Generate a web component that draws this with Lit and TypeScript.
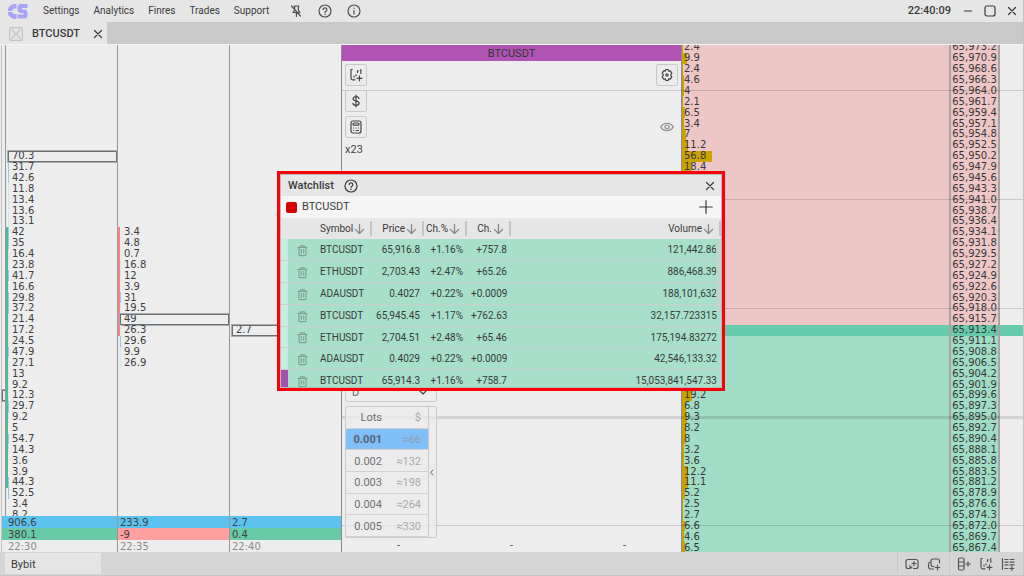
import { LitElement, html, css, svg, nothing } from "lit";
import { customElement } from "lit/decorators.js";
import { classMap } from "lit/directives/class-map.js";
import { styleMap } from "lit/directives/style-map.js";

const ROWS = 47;
const LAST_PRICE_ROW = 26;
const STEP = 2.3;
const TOP_PRICE = 65973.2;
const rowIndexes = Array.from({ length: ROWS }, (_, i) => i);

interface Cluster {
  time: string;
  total: string;
  delta: string;
  start: number;
  values: string[];
  peak: number;
  bar?: { from: number; to: number; up: boolean };
}

const clusters: Cluster[] = [
  {
    time: "22:30", total: "906.6", delta: "380.1", start: 10, peak: 10,
    bar: { from: 17, to: 40, up: true },
    values: ["70.3", "31.7", "42.6", "11.8", "13.4", "13.6", "13.1", "42", "35", "16.4", "23.8", "41.7", "16.6", "29.8",
      "37.2", "21.4", "17.2", "24.5", "47.9", "27.1", "13", "9.2", "12.3", "29.7", "9.2", "5", "54.7", "14.3", "3.6",
      "3.9", "44.3", "52.5", "3.4", "8.2"],
  },
  {
    time: "22:35", total: "233.9", delta: "-9", start: 17, peak: 25,
    bar: { from: 17, to: 26, up: false },
    values: ["3.4", "4.8", "0.7", "16.8", "12", "3.9", "31", "19.5", "49", "26.3", "29.6", "9.9", "26.9"],
  },
  { time: "22:40", total: "2.7", delta: "0.4", start: 26, peak: 26, values: ["2.7"] },
];

const book: Record<number, number> = {};
[2.4, 9.9, 2.4, 4.6, 4, 2.1, 6.5, 3.4, 7, 11.2, 56.8, 18.4].forEach((v, i) => (book[i] = v));
[19.2, 6.8, 9.3, 8.2, 8, 3.2, 3.6, 12.2, 11.1, 5.2, 2.5, 2.7, 6.6, 4.6, 6.5].forEach((v, i) => (book[32 + i] = v));

const watch = [
  ["BTCUSDT", "65,916.8", "+1.16%", "+757.8", "121,442.86"],
  ["ETHUSDT", "2,703.43", "+2.47%", "+65.26", "886,468.39"],
  ["ADAUSDT", "0.4027", "+0.22%", "+0.0009", "188,101,632"],
  ["BTCUSDT", "65,945.45", "+1.17%", "+762.63", "32,157.723315"],
  ["ETHUSDT", "2,704.51", "+2.48%", "+65.46", "175,194.83272"],
  ["ADAUSDT", "0.4029", "+0.22%", "+0.0009", "42,546,133.32"],
  ["BTCUSDT", "65,914.3", "+1.16%", "+758.7", "15,053,841,547.33"],
];

const lots = [["0.001", "≈66"], ["0.002", "≈132"], ["0.003", "≈198"], ["0.004", "≈264"], ["0.005", "≈330"]];

const icon = (body: unknown, size = 14, vb = 14) => html`<svg class="icon" width=${size} height=${size}
  viewBox="0 0 ${vb} ${vb}" fill="none" stroke="currentColor" stroke-width="1.2" stroke-linecap="round"
  stroke-linejoin="round" aria-hidden="true">${body}</svg>`;

const help = svg`<circle cx="7" cy="7" r="6"/><path d="M5.2 5.6a1.8 1.8 0 1 1 2.7 1.6c-.7.4-.9.7-.9 1.3M7 10.1v.3"/>`;
const info = svg`<circle cx="7" cy="7" r="6"/><path d="M7 6.5v3.4M7 4.1v.2"/>`;
const unpin = svg`<path d="M2.5 2 11.5 12M5 2h5M5.7 2.2v2M9.3 2.2v4l1.6 2.3H9M5.6 6 4 8.5h4M7.4 8.7V12.4"/>`;
const close = svg`<path d="M3.5 3.5l7 7M10.5 3.5l-7 7"/>`;
const minimize = svg`<path d="M3.5 7h7"/>`;
const maximize = svg`<rect x="2" y="2" width="10" height="10" rx="2"/>`;
const plus = svg`<path d="M7 .7v12.6M.7 7h12.6"/>`;
const arrow = svg`<path d="M5 1.2v8.3M1.2 5.8 5 9.6l3.8-3.8"/>`;
const trash = svg`<path d="M2.2 3.6h9.6M5 3.4V1.9h4v1.5M3.2 3.8v7.6q0 1.1 1.1 1.1h5.4q1.1 0 1.1-1.1V3.8M5.7 6v4M8.3 6v4"/>`;
const gear = svg`<path d="M5.900 1.500h2.200l.5 1.700 1.700-.4 1.500 2.300L10.600 7l1.200 1.900-1.500 2.300-1.700-.4-.5 1.700H5.900l-.5-1.700-1.700.4-1.500-2.300L3.400 7 2.200 5.100l1.500-2.300 1.700.4z"/><circle cx="7" cy="7" r="1.200"/>`;
const eye = svg`<path d="M.8 7C3.4 2 10.6 2 13.2 7 10.6 12 3.4 12 .8 7z"/><circle cx="7" cy="7" r="2"/>`;
const dollar = svg`<path d="M10 4.500C9.700 3.300 8.600 2.700 7 2.700c-1.700 0-2.900.7-2.900 2 0 3.100 6 1.400 6 4.600 0 1.300-1.300 2-3 2s-3-.7-3.200-2M7 1v12"/>`;
const calc = svg`<rect x="2" y="1" width="10" height="12" rx="2"/><rect x="4" y="3" width="6" height="2.200" rx="1"/><path d="M4.500 8h.1M7 8h.1M9.500 8h.1M4.500 10.500h.1M7 10.500h2.600"/>`;
const chartAdd = svg`<path d="M3.200 1.500H2V10q0 1.800 1.800 1.800H6M5 9.200v-1M7 7.800v-1M8.500 4.500V2.800h.8M11.800 1.500v4M10.500 7.800v5M8 10.300h5"/>`;
const windowAdd = svg`<path d="M5 11.500H3q-2 0-2-2v-5q0-2 2-2h8q2 0 2 2v5q0 2-2 2H8.500M5 8.700v2.800l2-1.500M9 4.500v4M7 6.500h4"/>`;
const copyAdd = svg`<path d="M7 9.500H6q-2 0-2-2V4q0-2 2-2h4.500q2 0 2 2v2M3 5Q1.500 5.500 1.500 7v2.500q0 2.500 2.500 2.500h2.500M10.500 8.200v4.600M8.200 10.500h4.600"/>`;
const columnAdd = svg`<rect x="1.500" y="1" width="5.500" height="12" rx="1.500"/><path d="M1.500 5H7M1.500 9H7M11 4.800v4.400M8.800 7h4.400"/>`;
const rowsAdd = svg`<path d="M1.500 1.500v11M4 2.500h3M9 2.500h4M4 5.200h3M9 5.200h4M4 7.900h3M9 7.900h4M4 11.500h3M10.800 9.500v4M8.800 11.500h4"/>`;

const base = css`
  * { box-sizing: border-box; }
  button { font: inherit; color: inherit; border: 0; background: none; padding: 0; margin: 0; display: inline-flex; align-items: center; justify-content: center; cursor: pointer; }
  .icon { display: block; flex: none; }
`;

@customElement("price-ladder")
class PriceLadder extends LitElement {
  static styles = [base, css`
    :host { display: flex; flex: 1; min-width: 0; min-height: 0; overflow: hidden; font: 10px/10px "DejaVu Sans", sans-serif; color: #383838; }
    .column { flex: 1; display: flex; flex-direction: column; margin: -3px 0 -1px; min-width: 0; border-left: 1px solid #8d8d8d; }
    .prices { flex: none; width: 51px; border-left: 2px solid #aba3a3; border-right: 2px solid #aba3a3; }
    .blank { flex: none; width: 23px; border: 0; }
    .row { flex: 1; min-height: 0; display: grid; align-items: center; }
    .ask { background: #edc6c6; }
    .bid { background: #a1dcc6; }
    .last { background: #66cbab; }
    .size, .bar { grid-area: 1 / 1; }
    .size { padding-left: 2px; }
    .bar { background: #c9a400; align-self: stretch; }
    .price { text-align: center; }
  `];

  render() {
    const tone = (i: number) => classMap({ row: true, ask: i < LAST_PRICE_ROW, bid: i > LAST_PRICE_ROW, last: i === LAST_PRICE_ROW });
    return html`
      <div class="column">
        ${rowIndexes.map((i) => html`<div class=${tone(i)}>
          ${book[i] === undefined ? nothing : html`<span class="bar" style=${styleMap({ width: `${Math.round(book[i] * 0.52)}px` })}></span>
          <span class="size">${book[i]}</span>`}
        </div>`)}
      </div>
      <div class="column prices">
        ${rowIndexes.map((i) => html`<div class=${tone(i)}><span class="price">${(TOP_PRICE - STEP * i).toLocaleString("en-US", { minimumFractionDigits: 1, maximumFractionDigits: 1 })}</span></div>`)}
      </div>
      <div class="column blank">
        ${rowIndexes.map((i) => html`<div class=${classMap({ row: true, last: i === LAST_PRICE_ROW })}></div>`)}
      </div>`;
  }
}

@customElement("cluster-panel")
class ClusterPanel extends LitElement {
  static styles = [base, css`
    :host { display: flex; min-width: 0; min-height: 0; overflow: hidden; padding-left: 1px; font: 10px/10px "DejaVu Sans", sans-serif; color: #404040; }
    .column { flex: 1; min-width: 0; display: grid; grid-template-rows: minmax(0, 1fr) 12px 12px 12px; border-left: 1px solid #999; }
    .edge { flex: none; width: 4px; border-left: 1px solid #c4c4c4; }
    .ladder { grid-area: 1 / 1 / 5 / 2; display: flex; flex-direction: column; margin: -3px 0 -1px; min-height: 0; }
    .row { flex: 1; min-height: 0; display: flex; align-items: stretch; }
    .mark { width: 2px; }
    .up { background: #4cbd93; }
    .down { background: #ff8080; }
    .value { flex: 1; display: flex; align-items: center; padding-left: 3px; border-left: 1px solid transparent; }
    .light { border-left-color: #d3e6f2; }
    .strong { border-left-color: #8ccdf5; }
    .peak { outline: 1px solid #6b7275; outline-offset: -1px; box-shadow: 0 0 0 1px #a8acae; border-left-color: transparent; }
    .foot { grid-column: 1; z-index: 1; display: flex; align-items: center; padding: 1px 0 0 2px; }
    .total { grid-row: 2; background: #5cc2f0; }
    .delta { grid-row: 3; background: #69caa8; }
    .minus { background: #ff9f9f; }
    .time { grid-row: 4; background: #ededed; color: #8b8b8b; }
  `];

  render() {
    return html`
      <div class="column edge">
        <div class="ladder">${rowIndexes.map((i) => html`<div class="row">${i === 32 ? html`<span class="value peak"></span>` : nothing}</div>`)}</div>
        <span class="foot total"></span><span class="foot delta"></span><span class="foot time"></span>
      </div>
      ${clusters.map((c) => html`<div class="column">
        <div class="ladder">
          ${rowIndexes.map((i) => {
            const value = c.values[i - c.start];
            const marked = c.bar !== undefined && i >= c.bar.from && i <= c.bar.to;
            const n = Number(value);
            return html`<div class="row">
              <span class=${classMap({ mark: true, up: marked && c.bar!.up, down: marked && !c.bar!.up })}></span>
              ${value === undefined ? nothing : html`<span class=${classMap({ value: true, light: n > 9 && n < 28, strong: n >= 28, peak: i === c.peak })}>${value}</span>`}
            </div>`;
          })}
        </div>
        <span class="foot total">${c.total}</span>
        <span class=${classMap({ foot: true, delta: true, minus: c.delta.startsWith("-") })}>${c.delta}</span>
        <span class="foot time">${c.time}</span>
      </div>`)}`;
  }
}

@customElement("chart-panel")
class ChartPanel extends LitElement {
  static styles = [base, css`
    :host { display: flex; flex-direction: column; position: relative; min-width: 0; min-height: 0; border-left: 1px solid #8d8d8d; font: 11px/16px Roboto, sans-serif; color: #444; }
    .title { background: #b053b2; color: #333; text-align: center; height: 16px; line-height: 18px; }
    .tools { display: flex; justify-content: space-between; padding: 3px 3px 0 3px; }
    .stack { display: flex; flex-direction: column; align-items: flex-start; gap: 4px; }
    .tool { width: 22px; height: 22px; border: 1px solid #c9c9c9; border-radius: 2px; background: #ececec; }
    .ghost { border-color: transparent; background: none; color: #888; margin-top: 26px; }
    .orders { flex: 1; padding: 0 0 0 3px; display: flex; flex-direction: column; justify-content: flex-end; align-items: flex-start; gap: 4px; width: 96px; }
    .mode { appearance: none; font: inherit; color: #666; background: transparent; border: 0; padding: 2px 6px 0; width: 100%; }
    .select { display: flex; align-items: center; width: 92px; height: 22px; border: 1px solid #ccc; border-radius: 2px; padding: 2px 8px 0 0; }
    .lots { display: flex; width: 92px; height: 132px; border: 1px solid #ccc; border-radius: 2px; background: #ebebebcc; }
    .sizes { flex: 1; height: 130px; border-collapse: collapse; color: #707070; line-height: 14px; border-right: 1px solid #ccc; }
    .sizes th { font-weight: 400; }
    .sizes th, .sizes td { padding: 2px 7px 0 0; text-align: right; border-bottom: 1px solid #d3d3d3; }
    .sizes .qty { width: 36px; padding-right: 0; }
    .sizes .usd { color: #aaa; }
    .sizes .current { background: #80bffa; }
    .sizes .current .qty { font-weight: 700; color: #555f6b; }
    .sizes .current .usd { color: #8d9fb0; }
    .handle { width: 7px; }
    .scale { display: grid; grid-template-columns: 1fr 1fr 1fr; height: 14px; line-height: 16px; text-align: center; }
  `];

  render() {
    return html`
      <div class="title">BTCUSDT</div>
      <div class="tools">
        <div class="stack">
          <button class="tool" aria-label="Add indicator">${icon(chartAdd)}</button>
          <button class="tool" aria-label="Currency">${icon(dollar)}</button>
          <button class="tool" aria-label="Calculator">${icon(calc)}</button>
          <span>x23</span>
        </div>
        <div class="stack">
          <button class="tool" aria-label="Chart settings">${icon(gear)}</button>
          <button class="tool ghost" aria-label="Visibility">${icon(eye)}</button>
        </div>
      </div>
      <div class="orders">
        <div class="select">
          <select class="mode" aria-label="Order mode"><option>D</option></select>
          ${icon(svg`<path d="M1.500 3.500 5 7l3.500-3.500"/>`, 10, 10)}
        </div>
        <div class="lots">
          <table class="sizes">
            <tr><th class="qty">Lots</th><th class="usd">$</th></tr>
            ${lots.map(([q, usd], i) => html`<tr class=${classMap({ current: i === 0 })}><td class="qty">${q}</td><td class="usd">${usd}</td></tr>`)}
          </table>
          <button class="handle" aria-label="Collapse lots">${icon(svg`<path d="M5.500 1.500 2.500 5l3 3.500"/>`, 7, 10)}</button>
        </div>
      </div>
      <div class="scale"><span>-</span><span>-</span><span>-</span></div>`;
  }
}

@customElement("watch-list")
class WatchList extends LitElement {
  static styles = [base, css`
    :host { display: flex; flex-direction: column; overflow: hidden; border: 3px solid #fa0009; outline: 1px solid #b9b9b9; outline-offset: -4px; padding: 1px; background: #e6e6e6; font: 10px/14px Roboto, sans-serif; color: #3a3a3a; }
    .head { flex: none; display: flex; align-items: center; height: 21px; padding: 0 4px 0 7px; gap: 10px; font-size: 11px; font-weight: 500; }
    .push { margin-left: auto; }
    .tab { flex: none; display: flex; align-items: center; gap: 5px; height: 22px; padding: 0 8px 0 5px; background: #f5f5f5; font-size: 11px; }
    .swatch { width: 11px; height: 11px; border-radius: 2px; background: #d60000; }
    .body { flex: 1; min-height: 0; overflow: hidden; position: relative; }
    .thumb { position: absolute; right: 1px; top: 22px; width: 4px; height: 72px; background: #c8d2cdcc; border-radius: 2px; }
    table { width: 100%; height: 174px; table-layout: fixed; border-collapse: collapse; }
    th, td { height: 21px; }
    th { font-weight: 400; padding: 0; }
    td { padding: 1px 4px 0; text-align: right; background: #a7dfcb; border-bottom: 1px solid #c9cfcc; }
    .sort { width: 100%; height: 15px; justify-content: flex-end; gap: 1px; padding-right: 5px; border-right: 2px solid #c4c4c4; white-space: nowrap; vertical-align: middle; }
    .sort .icon { color: #888; }
    .first { justify-content: space-between; padding-left: 4px; }
    .left { text-align: left; }
    .stripe { width: 7px; background: #c6ebe0; padding: 0; }
    .accent { background: #a34fae; }
    .del { width: 28px; color: #7f9f93; text-align: center; }
    .del button { vertical-align: middle; }
    .symbol { width: 56px; }
    .price { width: 52px; }
    .pct { width: 43px; }
    .chg { width: 44px; }
    thead .stripe, thead .del { background: none; }
  `];

  render() {
    const head = (name: string, cls: string, first = false) => html`<th class=${cls} scope="col">
      <button class=${classMap({ sort: true, first })}>${name}${icon(arrow, 11, 10)}</button></th>`;
    return html`
      <div class="head"><span>Watchlist</span><button aria-label="Help">${icon(help)}</button>
        <button class="push" aria-label="Close">${icon(close)}</button></div>
      <div class="tab"><span class="swatch"></span><span>BTCUSDT</span>
        <button class="push" aria-label="Add symbol">${icon(plus)}</button></div>
      <div class="body">
        <table>
          <thead><tr><th class="stripe"></th><th class="del"></th>${head("Symbol", "symbol", true)}${head("Price", "price")}${head("Ch.%", "pct")}${head("Ch.", "chg")}${head("Volume", "volume")}</tr></thead>
          <tbody>
            ${watch.map((r, i) => html`<tr>
              <td class=${classMap({ stripe: true, accent: i === 6 })}></td>
              <td class="del"><button aria-label="Remove ${r[0]}">${icon(trash, 13)}</button></td>
              <td class="left">${r[0]}</td>${r.slice(1).map((v) => html`<td>${v}</td>`)}
            </tr>`)}
          </tbody>
        </table>
        <span class="thumb"></span>
      </div>`;
  }
}

@customElement("app-root")
class AppRoot extends LitElement {
  static styles = [base, css`
    :host { display: flex; flex-direction: column; height: 100vh; position: relative; overflow: hidden; background: #ededed; font: 11px/14px Roboto, sans-serif; color: #3a3a3a; border-right: 1px solid #c4c4c4; }
    .top { flex: none; display: flex; align-items: center; height: 22px; background: #e6e6e6; padding: 0 4px 0 8px; font-size: 10px; }
    .logo { margin-right: 15px; }
    .menu { display: flex; gap: 14px; }
    .menu a { color: inherit; text-decoration: none; }
    .quick { display: flex; gap: 15px; margin-left: 20px; color: #505050; }
    .window { display: flex; align-items: center; gap: 8px; margin-left: auto; }
    .clock { font-size: 11px; font-weight: 500; margin-right: 2px; }
    .tabs { flex: none; display: flex; height: 22px; background: #c9c9c9; }
    .tab { display: flex; align-items: center; width: 107px; padding: 2px 2px 0 9px; background: #e6e6e6; font-weight: 500; }
    .tab .group { color: #c2c2c2; margin-right: 9px; }
    .tab .shut { margin-left: auto; }
    .work { flex: 1; min-height: 0; display: grid; grid-template-columns: 341fr 340fr 342fr; grid-template-rows: minmax(0, 1fr); border-top: 1px solid #f4f4f4; }
    .work > * { grid-row: 1; }
    .lines { grid-column: 2 / 4; z-index: 1; pointer-events: none; display: flex; flex-direction: column; margin: -3px 0 -1px; padding-left: 1px; }
    .slot { flex: 1; min-height: 0; display: flex; flex-direction: column; justify-content: center; }
    .rule { height: 1px; background: #00000026; }
    .bold { height: 3px; background: #0000001c; }
    .clusters { grid-column: 1; }
    .chart { grid-column: 2; z-index: 2; }
    .book { grid-column: 3; }
    .status { flex: none; display: flex; height: 24px; background: #d5d5d5; padding: 1px 0 1px 5px; border-bottom: 1px solid #c4c4c4; font-size: 11px; }
    .exchange { display: flex; align-items: center; width: 96px; padding: 2px 0 0 6px; background: #e5e5e5; }
    .group { display: flex; align-items: center; gap: 8px; }
    .status .group { padding: 0 8px 0 7px; border-left: 1px solid #c6c6c6; color: #555; }
    .status .push { margin-left: auto; }
    .watch { position: absolute; left: 277px; top: 171px; width: 448px; height: 220px; z-index: 3; }
  `];

  render() {
    return html`
      <header class="top">
        <svg class="icon logo" width="20" height="15" viewBox="0 0 20 15" aria-hidden="true">
          <path fill="#a9a5f5" d="M8.500 0v4.500H7a2.800 2.800 0 0 0 0 5.600h1.500V15H7A7 7 0 0 1 7 0zM19.500 0v4H14v1.500h2.500a3.500 3.500 0 0 1 3 3.500v2a3.500 3.500 0 0 1-3.500 3.500H9.500v-4h6V9h-3A3.500 3.500 0 0 1 9.500 5.500V3.500A3.500 3.500 0 0 1 13 0z"/>
          <path stroke="#e6e6e6" stroke-width="1" d="M0 7.500h5"/>
        </svg>
        <nav class="menu">${["Settings", "Analytics", "Finres", "Trades", "Support"].map((m) => html`<a href="#">${m}</a>`)}</nav>
        <div class="quick">
          <button aria-label="Unpin">${icon(unpin)}</button>
          <button aria-label="Help">${icon(help)}</button>
          <button aria-label="About">${icon(info)}</button>
        </div>
        <div class="window">
          <span class="clock">22:40:09</span>
          <button aria-label="Minimize">${icon(minimize)}</button>
          <button aria-label="Maximize">${icon(maximize)}</button>
          <button aria-label="Close">${icon(close)}</button>
        </div>
      </header>
      <div class="tabs">
        <div class="tab">
          <span class="group">${icon(svg`<rect x=".6" y=".6" width="12.800" height="12.800" rx="1"/><path d="M2.500 2.500l9 9M11.500 2.500l-9 9"/>`)}</span>
          <span>BTCUSDT</span>
          <button class="shut" aria-label="Close tab">${icon(close)}</button>
        </div>
      </div>
      <main class="work">
        <cluster-panel class="clusters"></cluster-panel>
        <chart-panel class="chart"></chart-panel>
        <price-ladder class="book"></price-ladder>
        <div class="lines">
          ${rowIndexes.map((i) => html`<div class="slot">${i % 10 === 4 ? html`<div class=${classMap({ rule: true, bold: i === 34 })}></div>` : nothing}</div>`)}
        </div>
      </main>
      <footer class="status">
        <span class="exchange">Bybit</span>
        <div class="group push">
          <button aria-label="Add window">${icon(windowAdd)}</button>
          <button aria-label="Duplicate window">${icon(copyAdd)}</button>
        </div>
        <div class="group">
          <button aria-label="Add order book">${icon(columnAdd)}</button>
          <button aria-label="Add chart">${icon(chartAdd)}</button>
          <button aria-label="Add table">${icon(rowsAdd)}</button>
        </div>
      </footer>
      <watch-list class="watch"></watch-list>`;
  }
}
